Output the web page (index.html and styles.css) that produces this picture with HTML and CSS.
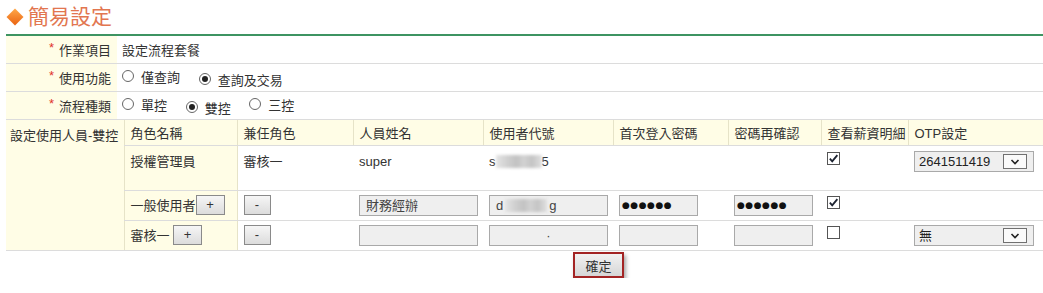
FILE: index.html
```html
<!DOCTYPE html>
<html>
  <head>
    <meta charset="utf-8">
    <link rel="stylesheet" href="styles.css">
  </head>
  <body>
  <h1 class="title"><span class="diamond"></span>簡易設定</h1>

  <table class="form">
    <tr>
      <th><em>*</em>作業項目</th>
      <td>設定流程套餐</td>
    </tr>
    <tr>
      <th><em>*</em>使用功能</th>
      <td>
        <label class="opt"><span class="radio"></span>僅查詢</label>
        <label class="opt"><span class="radio on"></span>查詢及交易</label>
      </td>
    </tr>
    <tr>
      <th><em>*</em>流程種類</th>
      <td>
        <label class="opt"><span class="radio"></span>單控</label>
        <label class="opt"><span class="radio on"></span>雙控</label>
        <label class="opt"><span class="radio"></span>三控</label>
      </td>
    </tr>
  </table>

  <table class="users">
    <tr>
      <th class="side">設定使用人員-雙控</th>
      <td class="holder">
        <table class="roles">
          <colgroup>
            <col style="width:113px"><col style="width:116px"><col style="width:130px"><col style="width:130px">
            <col style="width:115px"><col style="width:93px"><col style="width:87px"><col style="width:135px">
          </colgroup>
          <tr class="head">
            <th class="role">角色名稱</th>
            <th>兼任角色</th>
            <th>人員姓名</th>
            <th>使用者代號</th>
            <th>首次登入密碼</th>
            <th>密碼再確認</th>
            <th>查看薪資明細</th>
            <th>OTP設定</th>
          </tr>
          <tr class="tall">
            <td class="role">授權管理員</td>
            <td>審核一</td>
            <td>super</td>
            <td>s<span class="blur"></span>5</td>
            <td></td>
            <td></td>
            <td><span class="cb on"><svg viewBox="0 0 12 12"><path d="M2 6.2 L4.6 9 L10.2 2.4"/></svg></span></td>
            <td><span class="select">2641511419<span class="arrow"><svg viewBox="0 0 10 6"><path d="M1.5 1 L5 4.5 L8.5 1"/></svg></span></span></td>
          </tr>
          <tr class="edit">
            <td class="role">一般使用者<button class="btn plus">+</button></td>
            <td><button class="btn minus">-</button></td>
            <td><span class="field wide">財務經辦</span></td>
            <td><span class="field wide">d<span class="blur short"></span>g</span></td>
            <td><span class="field pw">●●●●●●</span></td>
            <td><span class="field pw">●●●●●●</span></td>
            <td><span class="cb on"><svg viewBox="0 0 12 12"><path d="M2 6.2 L4.6 9 L10.2 2.4"/></svg></span></td>
            <td></td>
          </tr>
          <tr class="edit">
            <td class="role">審核一 <button class="btn plus">+</button></td>
            <td><button class="btn minus">-</button></td>
            <td><span class="field wide"></span></td>
            <td><span class="field wide center">·</span></td>
            <td><span class="field pw"></span></td>
            <td><span class="field pw"></span></td>
            <td><span class="cb"></span></td>
            <td><span class="select">無<span class="arrow"><svg viewBox="0 0 10 6"><path d="M1.5 1 L5 4.5 L8.5 1"/></svg></span></span></td>
          </tr>
        </table>
      </td>
    </tr>
  </table>

  <div class="actions"><button class="submit">確定</button></div>
  </body>
</html>
```

FILE: styles.css
```css
body {
  margin: 0;
  padding: 2px 0 0 6px;
  font-family: "Liberation Sans", "Noto Sans CJK TC", sans-serif;
  font-size: 13px;
  color: #333;
  background: #fff;
}

table {
  font-size: inherit;
}

.title {
  display: flex;
  align-items: center;
  gap: 7px;
  height: 30px;
  margin: 0 0 2px;
  font-size: 21px;
  font-weight: normal;
  line-height: 28px;
  color: #e27650;
}

.diamond {
  width: 12px;
  height: 12px;
  margin-left: 3px;
  transform: rotate(45deg);
  background: linear-gradient(135deg, #ffa848, #ea6210);
}

.form,
.users {
  width: 1037px;
  border-collapse: collapse;
}

.form {
  border-top: 2px solid #3e9462;
}

.form th,
.form td {
  height: 27px;
  padding: 0 5px;
  border-bottom: 1px solid #dcdcdc;
}

.form th {
  width: 101px;
  padding: 0 6px 0 4px;
  background: #fffde6;
  text-align: right;
  font-weight: normal;
}

.form em {
  font-style: normal;
  color: #e0322b;
  position: relative;
  top: -3px;
  margin-right: 5px;
}

.opt {
  display: inline-flex;
  align-items: center;
  margin-right: 15px;
}

.radio {
  box-sizing: border-box;
  width: 12px;
  height: 12px;
  margin-right: 7px;
  border: 1px solid #666;
  border-radius: 50%;
  background: #fff;
  display: inline-flex;
  align-items: center;
  justify-content: center;
}

.radio.on::after {
  content: '';
  width: 6px;
  height: 6px;
  border-radius: 50%;
  background: #222;
}

.users {
  border-bottom: 1px solid #dcdcdc;
}

.users .side {
  width: 110px;
  padding: 5px 4px;
  vertical-align: top;
  text-align: left;
  font-weight: normal;
  white-space: nowrap;
  background: #fffde6;
}

.users .holder {
  padding: 0;
  vertical-align: top;
}

.roles {
  width: 919px;
  border-collapse: collapse;
  table-layout: fixed;
}

.roles th,
.roles td {
  padding: 0 6px;
  text-align: left;
  white-space: nowrap;
  border-bottom: 1px solid #dcdcdc;
}

.roles tr:last-child td {
  border-bottom: 0;
}

.roles th {
  height: 25px;
  font-weight: normal;
  background: #fffde6;
  border-right: 1px solid #e6e3c8;
}

.roles th:last-child {
  border-right: 0;
}

.roles td {
  vertical-align: top;
  line-height: 21px;
}

.roles .role {
  background: #fffde6;
  border-left: 1px solid #e6e3c8;
  border-right: 1px solid #e6e3c8;
}

.tall td {
  height: 39px;
  padding-top: 5px;
}

.edit td {
  height: 25px;
  padding-top: 4px;
}

.blur {
  display: inline-block;
  width: 46px;
  height: 13px;
  vertical-align: -2px;
  background: linear-gradient(90deg, #e4e4e4, #cfcfcf 25%, #c2c2c2 45%, #d2d2d2 60%, #c4c4c4 78%, #e0e0e0);
  filter: blur(1.5px);
}

.blur.short {
  width: 42px;
  margin: 0 2px;
}

.field {
  display: inline-block;
  box-sizing: border-box;
  height: 21px;
  padding: 0 6px;
  vertical-align: top;
  line-height: 19px;
  color: #444;
  background: #efefef;
  border: 1px solid #a9a9a9;
}

.field.wide {
  width: 119px;
}

.field.pw {
  width: 79px;
  padding: 0 2px;
  font-family: "DejaVu Sans", sans-serif;
  font-size: 9px;
  letter-spacing: 0.5px;
  color: #111;
}

.field.center {
  text-align: center;
}

.btn {
  box-sizing: border-box;
  height: 20px;
  padding: 0;
  vertical-align: top;
  font: inherit;
  line-height: 18px;
  color: #333;
  background: linear-gradient(#f6f6f6, #dcdcdc);
  border: 1px solid #8a8a8a;
}

.btn.plus {
  width: 29px;
}

.btn.minus {
  width: 27px;
}

.cb {
  display: inline-block;
  box-sizing: border-box;
  width: 13px;
  height: 13px;
  margin-top: 1px;
  vertical-align: top;
  background: #fff;
  border: 1px solid #555;
}

.cb svg {
  display: block;
  width: 11px;
  height: 11px;
  fill: none;
  stroke: #1c2230;
  stroke-width: 2;
}

.select {
  display: flex;
  align-items: center;
  justify-content: space-between;
  box-sizing: border-box;
  width: 120px;
  height: 21px;
  padding: 0 6px 0 4px;
  line-height: 19px;
  color: #222;
  background: #efefef;
  border: 1px solid #a9a9a9;
}

.arrow {
  display: flex;
  align-items: center;
  justify-content: center;
  box-sizing: border-box;
  width: 24px;
  height: 15px;
  background: #fafafa;
  border: 1px solid #707070;
}

.arrow svg {
  width: 10px;
  height: 6px;
  fill: none;
  stroke: #222;
  stroke-width: 1.6;
}

.actions {
  padding: 1px 0 0 567px;
}

.submit {
  box-sizing: border-box;
  width: 51px;
  height: 26px;
  padding: 0;
  font: inherit;
  color: #333;
  background: linear-gradient(#f2f2f2, #d6d6d6);
  border: 2px solid #a32424;
  box-shadow: 2px 3px 4px rgba(0, 0, 0, 0.35);
}
```
